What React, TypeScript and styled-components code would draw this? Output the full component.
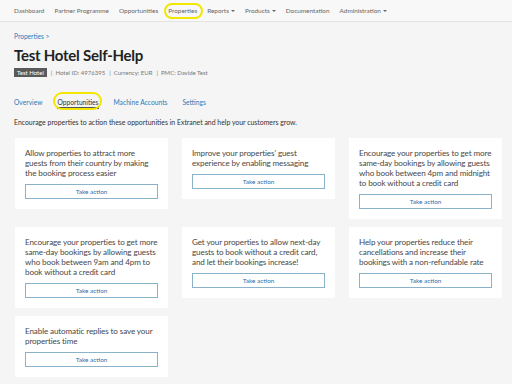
import React from "react";
import styled, { createGlobalStyle } from "styled-components";

const Global = createGlobalStyle`
  html, body { margin: 0; padding: 0; background: #f5f5f5; }
  body { font-family: "Lato", "Open Sans", sans-serif; color: #333; }
  * { box-sizing: border-box; }
`;

const Page = styled.div`
  position: relative;
  width: 512px;
  min-height: 384px;
  background: #f5f5f5;
`;

const NavBar = styled.nav`
  height: 22px;
  background: #f8f8f8;
  border-bottom: 1px solid #e3e3e3;
  display: flex;
  align-items: center;
  padding-left: 14px;
  gap: 10px;
`;

const NavItem = styled.span`
  font-size: 6.4px;
  color: #666;
  white-space: nowrap;
  display: inline-flex;
  align-items: center;
  gap: 2px;
`;

const Caret = styled.span`
  display: inline-block;
  width: 0;
  height: 0;
  border-left: 2px solid transparent;
  border-right: 2px solid transparent;
  border-top: 2px solid #666;
`;

const Main = styled.main`
  padding: 10px 10px 0 14px;
`;

const Crumb = styled.div`
  font-size: 6.6px;
  color: #2a7ab8;
  height: 9px;
  line-height: 9px;
`;

const Title = styled.h1`
  margin: 4px 0 0;
  font-size: 15px;
  line-height: 20px;
  font-weight: 700;
  letter-spacing: -0.25px;
  color: #222;
`;

const Meta = styled.div`
  margin-top: 3px;
  display: flex;
  align-items: center;
  gap: 4px;
  font-size: 6px;
  color: #777;
  white-space: pre;
`;

const Badge = styled.span`
  background: #5a5a5a;
  color: #fff;
  padding: 1px 3px;
  font-size: 6px;
  line-height: 7px;
`;

const Tabs = styled.div`
  margin-top: 20px;
  display: flex;
  gap: 15px;
  height: 14px;
`;

const Tab = styled.span<{ $active?: boolean }>`
  font-size: 6.7px;
  line-height: 10px;
  color: ${(p) => (p.$active ? "#333" : "#2a7ab8")};
  border-bottom: 2px solid ${(p) => (p.$active ? "#555" : "transparent")};
  height: 12px;
  align-self: flex-start;
`;

const Intro = styled.p`
  margin: 6px 0 0;
  font-size: 6.9px;
  line-height: 10px;
  color: #333;
`;

const Grid = styled.div`
  margin-top: 11px;
  margin-left: 1px;
  display: grid;
  grid-template-columns: repeat(3, 153px);
  column-gap: 14px;
  row-gap: 8px;
  align-items: start;
`;

const Card = styled.div`
  background: #fff;
  padding: 10px 10px 10px;
  display: flex;
  flex-direction: column;
  gap: 6px;
`;

const CardText = styled.p`
  margin: 0;
  font-size: 8.1px;
  letter-spacing: -0.12px;
  line-height: 10px;
  color: #484848;
`;

const ActionButton = styled.button`
  height: 15px;
  width: 100%;
  background: #fff;
  border: 1px solid #8ab3c9;
  color: #2a6fa8;
  font-family: inherit;
  font-size: 6.4px;
  padding: 0;
  cursor: pointer;
`;

const Highlight = styled.div<{ $x: number; $y: number; $w: number; $h: number }>`
  position: absolute;
  left: ${(p) => p.$x}px;
  top: ${(p) => p.$y}px;
  width: ${(p) => p.$w}px;
  height: ${(p) => p.$h}px;
  border: 2px solid #f3e600;
  border-radius: 9px;
  pointer-events: none;
`;

const navItems: { label: string; caret?: boolean }[] = [
  { label: "Dashboard" },
  { label: "Partner Programme" },
  { label: "Opportunities" },
  { label: "Properties" },
  { label: "Reports", caret: true },
  { label: "Products", caret: true },
  { label: "Documentation" },
  { label: "Administration", caret: true },
];

const cards = [
  "Allow properties to attract more guests from their country by making the booking process easier",
  "Improve your properties' guest experience by enabling messaging",
  "Encourage your properties to get more same-day bookings by allowing guests who book between 4pm and midnight to book without a credit card",
  "Encourage your properties to get more same-day bookings by allowing guests who book between 9am and 4pm to book without a credit card",
  "Get your properties to allow next-day guests to book without a credit card, and let their bookings increase!",
  "Help your properties reduce their cancellations and increase their bookings with a non-refundable rate",
  "Enable automatic replies to save your properties time",
];

export default function App() {
  return (
    <Page>
      <Global />
      <NavBar>
        {navItems.map((n) => (
          <NavItem key={n.label}>
            {n.label}
            {n.caret && <Caret />}
          </NavItem>
        ))}
      </NavBar>
      <Main>
        <Crumb>Properties &gt;</Crumb>
        <Title>Test Hotel Self-Help</Title>
        <Meta>
          <Badge>Test Hotel</Badge>
          <span>{"|  Hotel ID: 4976395"}</span>
          <span>{"|  Currency: EUR"}</span>
          <span>{"|  PMC: Davide Test"}</span>
        </Meta>
        <Tabs>
          <Tab>Overview</Tab>
          <Tab $active>Opportunities</Tab>
          <Tab>Machine Accounts</Tab>
          <Tab>Settings</Tab>
        </Tabs>
        <Intro>
          Encourage properties to action these opportunities in Extranet and help your customers grow.
        </Intro>
        <Grid>
          {cards.map((c) => (
            <Card key={c}>
              <CardText>{c}</CardText>
              <ActionButton>Take action</ActionButton>
            </Card>
          ))}
        </Grid>
      </Main>
      <Highlight $x={164} $y={3} $w={39} $h={16} />
      <Highlight $x={53} $y={92} $w={49} $h={18} />
    </Page>
  );
}
